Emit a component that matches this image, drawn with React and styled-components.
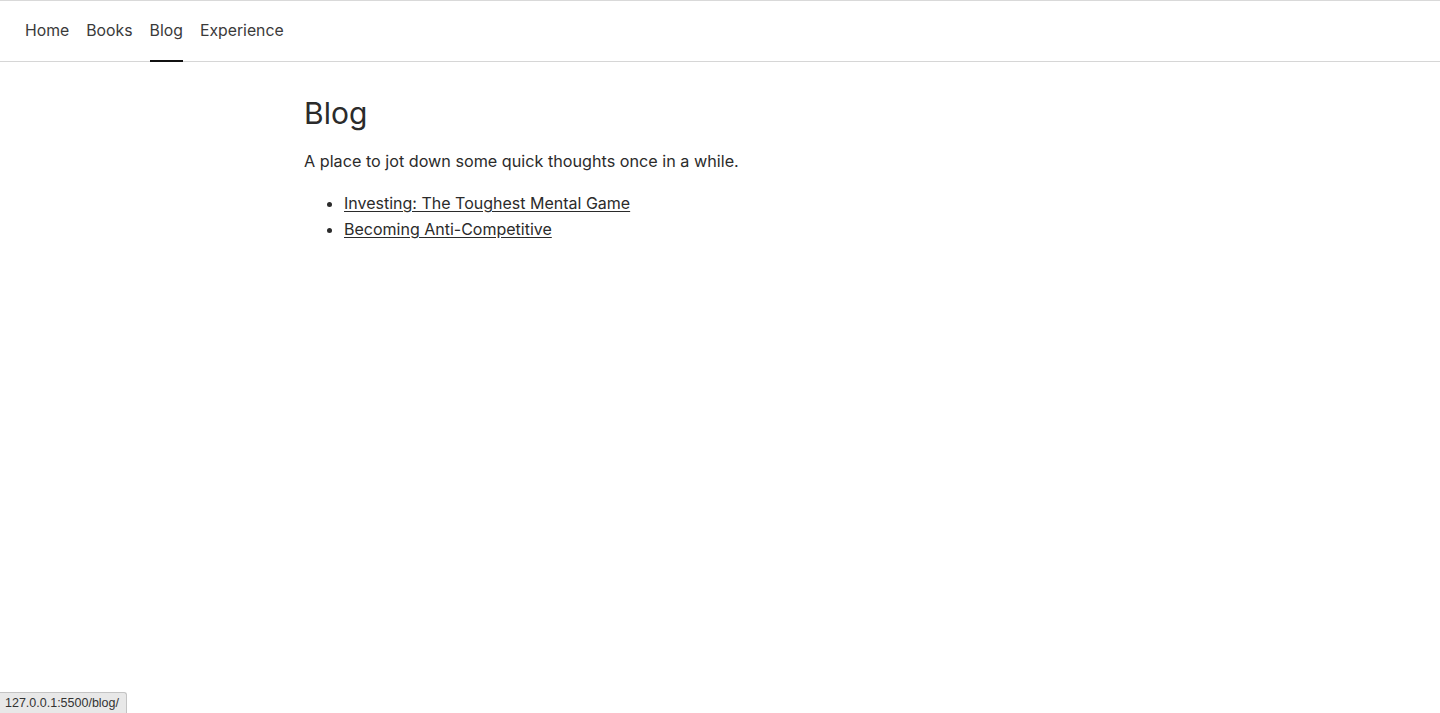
import styled, { createGlobalStyle } from "styled-components";

const GlobalStyle = createGlobalStyle`
  html, body {
    margin: 0;
    padding: 0;
    background: #fff;
  }
  body {
    font-family: "Inter", "Liberation Sans", sans-serif;
    color: #2b2b2b;
  }
`;

const Page = styled.div`
  min-height: 713px;
  border-top: 1px solid #d9d9d9;
  box-sizing: border-box;
`;

const Nav = styled.nav`
  display: flex;
  gap: 17px;
  height: 60px;
  padding: 0 25px;
  border-bottom: 1px solid #d6d6d6;
`;

const NavLink = styled.a`
  display: flex;
  align-items: center;
  font-size: 15.8px;
  color: #3a3a3a;
  text-decoration: none;
  border-bottom: 2px solid ${(p) => (p.$active ? "#111" : "transparent")};
  margin-bottom: -1px;
`;

const Main = styled.main`
  max-width: 832px;
  margin: 0 auto;
  padding-top: 29px;
`;

const Title = styled.h1`
  font-size: 30px;
  font-weight: 400;
  margin: 0 0 13px;
  line-height: 44px;
  color: #2b2b2b;
`;

const Lead = styled.p`
  font-size: 16.2px;
  margin: 0 0 16px;
  line-height: 26px;
`;

const List = styled.ul`
  margin: 0;
  padding-left: 40px;
  font-size: 16px;
  line-height: 26px;
`;

const PostLink = styled.a`
  color: #2b2b2b;
  text-decoration: underline;
  text-underline-offset: 2px;
`;

const StatusBar = styled.div`
  position: fixed;
  left: 0;
  bottom: 0;
  padding: 3px 7px 3px 5px;
  font-family: "Liberation Sans", sans-serif;
  font-size: 12.5px;
  color: #333;
  background: #e8e8e8;
  border: 1px solid #c4c4c4;
  border-left: none;
  border-bottom: none;
  border-top-right-radius: 3px;
`;

export default function App() {
  return (
    <>
      <GlobalStyle />
      <Page>
        <Nav>
          <NavLink href="#">Home</NavLink>
          <NavLink href="#">Books</NavLink>
          <NavLink href="#" $active>Blog</NavLink>
          <NavLink href="#">Experience</NavLink>
        </Nav>
        <Main>
          <Title>Blog</Title>
          <Lead>A place to jot down some quick thoughts once in a while.</Lead>
          <List>
            <li><PostLink href="#">Investing: The Toughest Mental Game</PostLink></li>
            <li><PostLink href="#">Becoming Anti-Competitive</PostLink></li>
          </List>
        </Main>
        <StatusBar>127.0.0.1:5500/blog/</StatusBar>
      </Page>
    </>
  );
}
